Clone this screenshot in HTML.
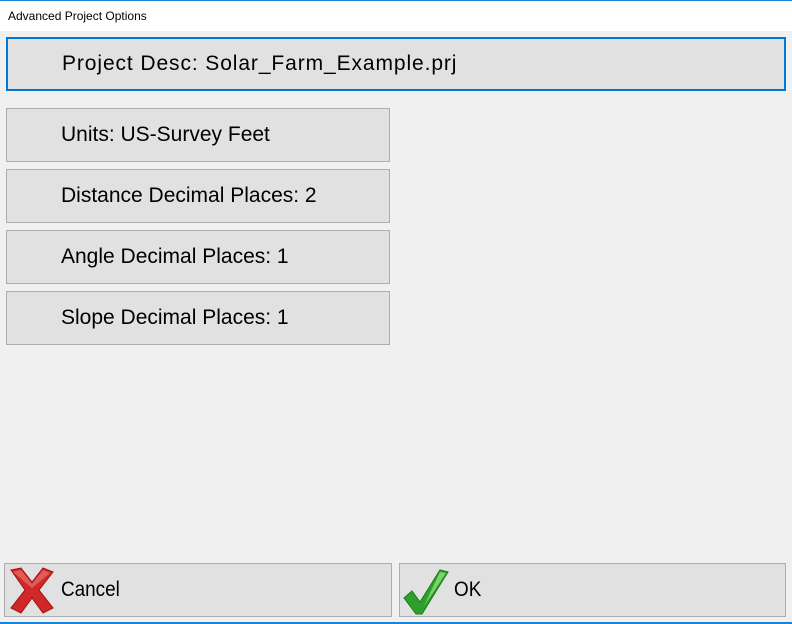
<!DOCTYPE html>
<html><head><style>
body{margin:0;width:792px;height:624px;background:#f0f0f0;position:relative;overflow:hidden;font-family:"Liberation Sans","DejaVu Sans",sans-serif;}
.top{position:absolute;left:0;top:0;width:792px;height:1px;background:#1883d7}
.title{position:absolute;left:0;top:1px;width:792px;height:30px;background:#fff;font-size:12px;line-height:30px;}
.title span{position:absolute;left:8px;top:0;}
.b{position:absolute;box-sizing:border-box;background:#e1e1e1;border:1px solid #adadad;font-size:21px;color:#000;}
.b span{position:absolute;left:54px;top:50%;transform:translateY(-50%);white-space:nowrap}
.sel{border:2px solid #0078d7}
.bot{position:absolute;left:0;top:622px;width:792px;height:2px;background:#1883d7}
.nar{font-size:21px;transform:translateY(-50%) scaleX(0.9)!important;transform-origin:left center}
</style></head><body>
<div class="top"></div>
<div class="title"><span>Advanced Project Options</span></div>
<div class="b sel" style="left:6px;top:37px;width:780px;height:54px"><span style="letter-spacing:0.9px">Project Desc: Solar_Farm_Example.prj</span></div>
<div class="b" style="left:6px;top:108px;width:384px;height:54px"><span>Units: US-Survey Feet</span></div>
<div class="b" style="left:6px;top:169px;width:384px;height:54px"><span>Distance Decimal Places: 2</span></div>
<div class="b" style="left:6px;top:230px;width:384px;height:54px"><span>Angle Decimal Places: 1</span></div>
<div class="b" style="left:6px;top:291px;width:384px;height:54px"><span>Slope Decimal Places: 1</span></div>
<div class="b" style="left:4px;top:563px;width:388px;height:54px">
<svg style="position:absolute;left:2px;top:2px" width="50" height="48" viewBox="0 0 50 48">
<path d="M4 4 L14 2 L25 16 L36 2 L46 6 L32 24 L46 42 L36 47 L25 32 L14 47 L4 42 L18 24 Z" fill="#d02828" stroke="#a01010" stroke-width="1"/>
<path d="M6 6 L14 4 L25 18 L36 4 L43 7 L25 22 Z" fill="#e87070" opacity="0.7"/>
</svg>
<span class="nar" style="left:56px">Cancel</span></div>
<div class="b" style="left:399px;top:563px;width:387px;height:54px">
<svg style="position:absolute;left:2px;top:2px" width="50" height="50" viewBox="0 0 50 50">
<path d="M2 32 L10 25 L18 36 L38 4 L46 6 L20 48 L14 48 Z" fill="#2ea02a" stroke="#1a7a18" stroke-width="1"/>
<path d="M38 6 L44 7 L22 40 Z" fill="#8ee080" opacity="0.8"/>
</svg>
<span class="nar" style="left:54px">OK</span></div>
<div class="bot"></div>
</body></html>
